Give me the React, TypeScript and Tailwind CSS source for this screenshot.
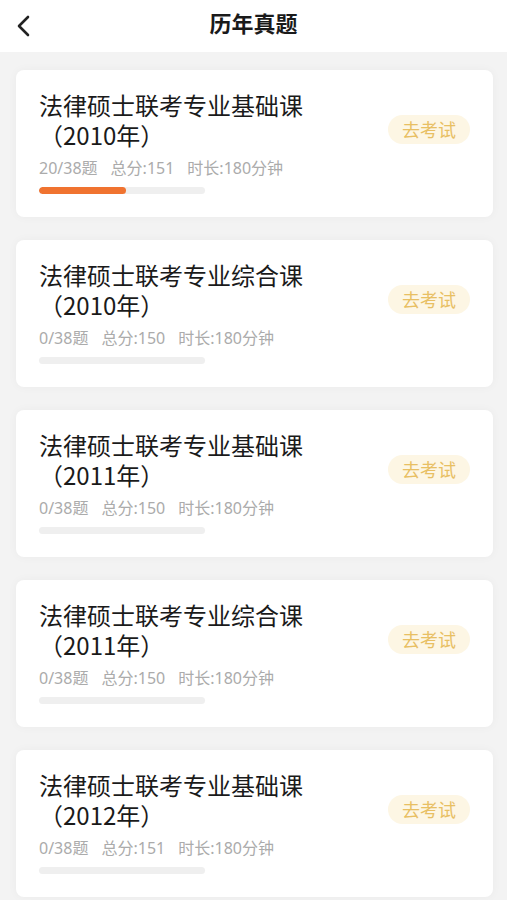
import React from "react";

type Paper = {
  name: string;
  year: number;
  done: number;
  total: number;
  score: number;
};

const papers: Paper[] = [
  { name: "法律硕士联考专业基础课", year: 2010, done: 20, total: 38, score: 151 },
  { name: "法律硕士联考专业综合课", year: 2010, done: 0, total: 38, score: 150 },
  { name: "法律硕士联考专业基础课", year: 2011, done: 0, total: 38, score: 150 },
  { name: "法律硕士联考专业综合课", year: 2011, done: 0, total: 38, score: 150 },
  { name: "法律硕士联考专业基础课", year: 2012, done: 0, total: 38, score: 151 },
];

function PaperCard({ paper }: { paper: Paper }) {
  const pct = (paper.done / paper.total) * 100;
  return (
    <div className="flex items-start justify-between rounded-lg bg-white pl-[23px] pr-[23px] pt-[20px] pb-[23px] shadow-[0_0_10px_rgba(0,0,0,0.04)]">
      <div>
        <p className="text-[24px] leading-[30px] text-[#1a1a1a]">
          {paper.name}
          <br />（{paper.year}年）
        </p>
        <div
          className="mt-[8px] flex gap-[13px] text-[16px] leading-5 text-[#ababab]"
          style={{ fontFamily: '"Noto Sans", "Noto Sans CJK SC", sans-serif' }}
        >
          <span>
            {paper.done}/{paper.total}题
          </span>
          <span>总分:{paper.score}</span>
          <span>时长:180分钟</span>
        </div>
        <div className="mt-[9px] h-[7px] w-[166px] overflow-hidden rounded-full bg-[#efefef]">
          <div className="h-full rounded-full bg-[#f07330]" style={{ width: `${pct}%` }} />
        </div>
      </div>
      <button className="mt-[25px] flex h-[29px] w-[82px] items-center justify-center rounded-full bg-[#fdf6e4] text-[18px] text-[#e8bf63]">
        去考试
      </button>
    </div>
  );
}

export default function App() {
  return (
    <main
      className="min-h-[900px] bg-[#f3f3f3]"
      style={{ fontFamily: '"Noto Sans CJK SC", "Noto Sans", sans-serif' }}
    >
      {/* header */}
      <header className="relative flex h-[52px] items-center justify-center bg-white">
        <button className="absolute left-[13px] top-[11px] p-1">
          <svg width="14" height="22" viewBox="0 0 14 22" fill="none">
            <polyline
              points="11,2 2,11 11,20"
              stroke="#222"
              strokeWidth="2.6"
              strokeLinecap="round"
              strokeLinejoin="round"
            />
          </svg>
        </button>
        <h1 className="-mt-[8px] text-[22px] font-bold text-[#1a1a1a]">历年真题</h1>
      </header>

      {/* list */}
      <section className="flex flex-col gap-[23px] pl-4 pr-[14px] pt-[18px] pb-6">
        {papers.map((p, i) => (
          <PaperCard key={i} paper={p} />
        ))}
      </section>
    </main>
  );
}
